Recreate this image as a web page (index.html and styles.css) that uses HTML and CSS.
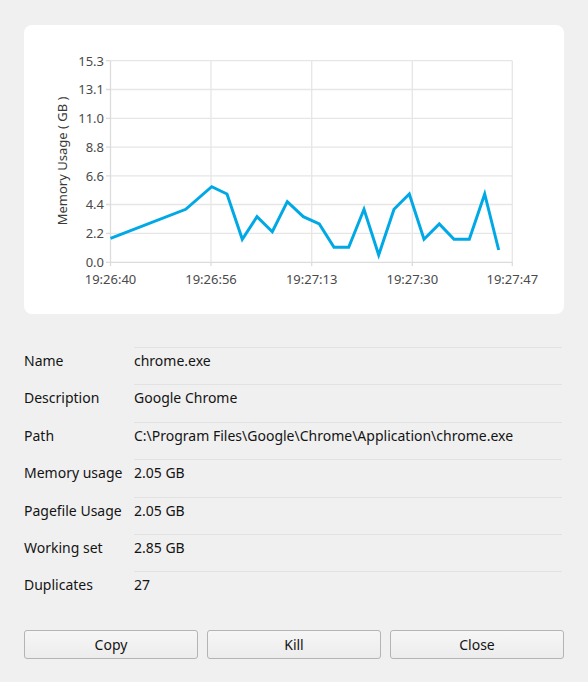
FILE: index.html
```html
<!DOCTYPE html>
<html>
<head>
<meta charset="utf-8">
<link rel="stylesheet" href="styles.css">
</head>
<body>
<div class="window">
  <div class="card">
    <svg class="chart" viewBox="24 25 540 289" width="540" height="289">
      <g class="grid">
        <line x1="110.5" y1="60.7" x2="512.3" y2="60.7"/>
        <line x1="110.5" y1="89.5" x2="512.3" y2="89.5"/>
        <line x1="110.5" y1="118.3" x2="512.3" y2="118.3"/>
        <line x1="110.5" y1="147.1" x2="512.3" y2="147.1"/>
        <line x1="110.5" y1="175.9" x2="512.3" y2="175.9"/>
        <line x1="110.5" y1="204.5" x2="512.3" y2="204.5"/>
        <line x1="110.5" y1="233.3" x2="512.3" y2="233.3"/>
        <line x1="211" y1="60.7" x2="211" y2="262.3"/>
        <line x1="311.7" y1="60.7" x2="311.7" y2="262.3"/>
        <line x1="412.3" y1="60.7" x2="412.3" y2="262.3"/>
        <line x1="512.3" y1="60.7" x2="512.3" y2="262.3"/>
      </g>
      <g class="axis">
        <line x1="110.5" y1="60.7" x2="110.5" y2="266"/>
        <line x1="106" y1="262.3" x2="512.3" y2="262.3"/>
        <line x1="106" y1="60.7" x2="110.5" y2="60.7"/>
        <line x1="106" y1="89.5" x2="110.5" y2="89.5"/>
        <line x1="106" y1="118.3" x2="110.5" y2="118.3"/>
        <line x1="106" y1="147.1" x2="110.5" y2="147.1"/>
        <line x1="106" y1="175.9" x2="110.5" y2="175.9"/>
        <line x1="106" y1="204.5" x2="110.5" y2="204.5"/>
        <line x1="106" y1="233.3" x2="110.5" y2="233.3"/>
        <line x1="211" y1="262.3" x2="211" y2="266"/>
        <line x1="311.7" y1="262.3" x2="311.7" y2="266"/>
        <line x1="412.3" y1="262.3" x2="412.3" y2="266"/>
        <line x1="512.3" y1="262.3" x2="512.3" y2="266"/>
      </g>
      <g class="ylabels">
        <text x="104" y="65.5">15.3</text>
        <text x="104" y="94.3">13.1</text>
        <text x="104" y="123.1">11.0</text>
        <text x="104" y="151.9">8.8</text>
        <text x="104" y="180.7">6.6</text>
        <text x="104" y="209.3">4.4</text>
        <text x="104" y="238.1">2.2</text>
        <text x="104" y="267.1">0.0</text>
      </g>
      <g class="xlabels">
        <text x="110.5" y="284">19:26:40</text>
        <text x="211" y="284">19:26:56</text>
        <text x="311.7" y="284">19:27:13</text>
        <text x="412.3" y="284">19:27:30</text>
        <text x="512.3" y="284">19:27:47</text>
      </g>
      <text class="ytitle" transform="translate(67 161) rotate(-90)">Memory Usage ( GB )</text>
      <polyline class="series" points="110.5,238.3 185.7,209.3 211.7,186.7 227,194 242.3,239.3 257,216.7 272.3,231.7 287.3,201.7 303.3,216.7 319.3,224 334,247.3 348.7,247.3 364,209.3 378.7,255 394,209.3 409.3,194 424,239.3 439.3,224 454,239.3 469.3,239.3 484.7,194 498.7,250"/>
    </svg>
  </div>

  <div class="details">
    <div class="row"><div class="label">Name</div><div class="value">chrome.exe</div></div>
    <div class="row"><div class="label">Description</div><div class="value">Google Chrome</div></div>
    <div class="row"><div class="label">Path</div><div class="value">C:\Program Files\Google\Chrome\Application\chrome.exe</div></div>
    <div class="row"><div class="label">Memory usage</div><div class="value">2.05 GB</div></div>
    <div class="row"><div class="label">Pagefile Usage</div><div class="value">2.05 GB</div></div>
    <div class="row"><div class="label">Working set</div><div class="value">2.85 GB</div></div>
    <div class="row"><div class="label">Duplicates</div><div class="value">27</div></div>
  </div>

  <div class="buttons">
    <button class="btn">Copy</button>
    <button class="btn">Kill</button>
    <button class="btn">Close</button>
  </div>
</div>
</body>
</html>
```
FILE: styles.css
```css
html, body {
  margin: 0;
  padding: 0;
  background: #f0f0f0;
}
body {
  font-family: "Noto Sans", "Open Sans", "Liberation Sans", sans-serif;
  font-size: 14px;
  color: #141414;
  width: 588px;
  height: 682px;
  overflow: hidden;
}
.window {
  padding: 25px 24px 0 24px;
}
.card {
  background: #ffffff;
  border-radius: 8px;
  height: 289px;
  overflow: hidden;
}
.chart {
  display: block;
}
.grid line {
  stroke: #e6e6e6;
  stroke-width: 1.3;
}
.axis line {
  stroke: #dcdcdc;
  stroke-width: 1.3;
}
.ylabels text {
  font-family: "Noto Sans", "Open Sans", sans-serif;
  font-size: 13px;
  fill: #4a4a4a;
  text-anchor: end;
}
.xlabels text {
  font-family: "Noto Sans", "Open Sans", sans-serif;
  font-size: 13px;
  fill: #4a4a4a;
  text-anchor: middle;
}
.ytitle {
  font-family: "Noto Sans", "Open Sans", sans-serif;
  font-size: 13px;
  fill: #3a3a3a;
  text-anchor: middle;
}
.series {
  fill: none;
  stroke: #00a9e6;
  stroke-width: 3;
  stroke-linejoin: miter;
}
.details {
  margin-top: 33px;
  display: flex;
  flex-direction: column;
  padding-right: 2px;
}
.row {
  display: grid;
  grid-template-columns: 110px 1fr;
  height: 37.4px;
}
.label, .value {
  line-height: 20px;
  padding-top: 4px;
}
.value {
  border-top: 1px solid #e2e2e2;
  padding-top: 3px;
}
.buttons {
  margin-top: 21px;
  display: grid;
  grid-template-columns: 1fr 1fr 1fr;
  gap: 9px;
}
.btn {
  height: 29px;
  border: 1px solid #b4b4b4;
  border-radius: 3px;
  background: linear-gradient(#f6f6f6, #ececec);
  font-family: "Noto Sans", "Open Sans", "Liberation Sans", sans-serif;
  font-size: 14px;
  color: #141414;
  padding: 0;
}
```
